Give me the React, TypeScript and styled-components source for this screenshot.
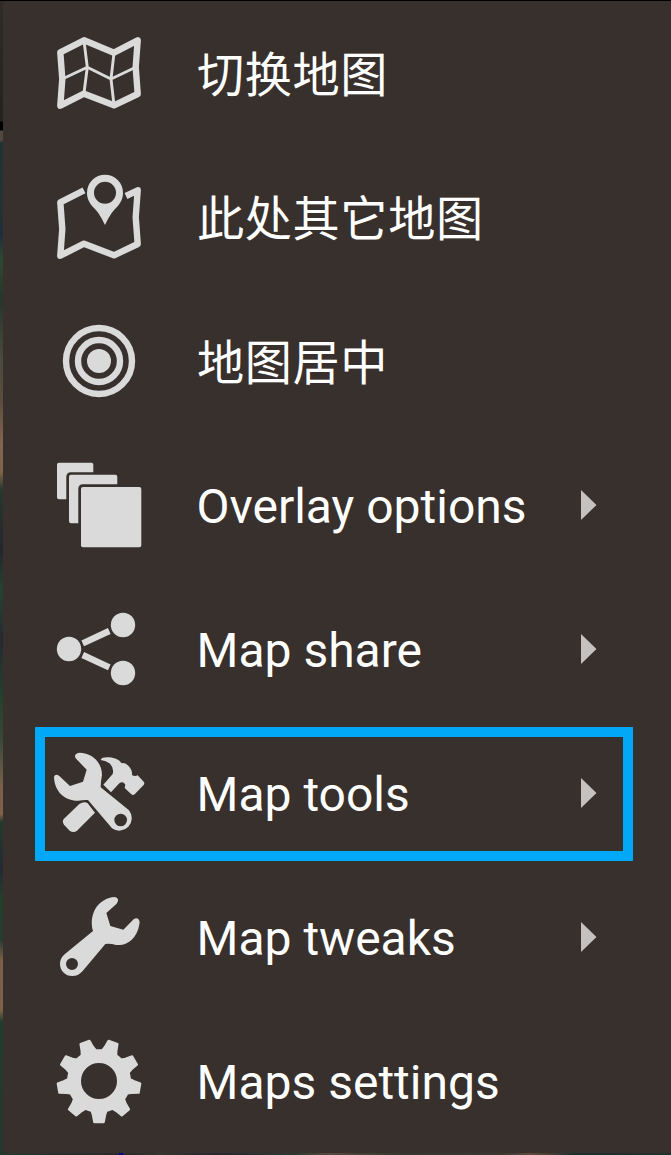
import React from 'react';
import styled, { createGlobalStyle } from 'styled-components';

const GlobalStyle = createGlobalStyle`
  body { margin: 0; background: #000; }
`;

const MapBackdrop = styled.main`
  box-sizing: border-box;
  width: 671px;
  height: 1155px;
  overflow: hidden;
  padding: 1px 0 2px 3px;
  background:
    linear-gradient(#000, #000) 0 0 / 100% 1px no-repeat,
    linear-gradient(#00009c, #00009c) 119px 100% / 4px 2px no-repeat,
    linear-gradient(90deg, #26372d 0, #292a2a 18%, #34352c 24%, #272733 32%, #2c3a31 44%, #55483b 49%, #34372e 60%, #3b3831 75%, #60493a 79%, #1b2f30 86%, #20322e 100%) 0 100% / 100% 2px no-repeat,
    linear-gradient(#302b28 0, #24211f 121px, #000 122px, #000 130px, #504841 131px, #504841 140px, #1c3430 143px, #243331 200px, #202e38 235px, #2d4932 260px, #26362b 300px, #4a4a3e 360px, #5b4c3d 400px, #846650 445px, #806247 472px, #26382e 490px, #25262c 550px, #254331 590px, #252a31 640px, #24412d 700px, #39483a 740px, #776049 785px, #806248 814px, #203b2b 822px, #262934 870px, #24412d 900px, #263c30 940px, #7b5e48 960px, #806148 1010px, #203d2d 1022px, #26362e 1155px) 0 0 / 12px 100% no-repeat,
    #312e2a;
`;

const Menu = styled.nav`
  height: 1152px;
  border-radius: 4px;
  background: #38302c;
`;

const MenuItem = styled.div`
  position: relative;
  display: grid;
  grid-template-columns: 96px 1fr 16px;
  column-gap: 49px;
  align-items: center;
  box-sizing: border-box;
  height: 144px;
  padding: 0 74px 0 48px;
`;

const Highlight = styled.span`
  position: absolute;
  top: 6px;
  left: 32px;
  box-sizing: border-box;
  width: 598px;
  height: 134px;
  border: 10px solid #00a8f7;
`;

const Icon = styled.svg`
  display: block;
  width: 96px;
  height: 96px;
  fill: #dadada;
  color: #dadada;
`;

const Label = styled.span<{ $cjk: boolean }>`
  padding-top: ${({ $cjk }) => ($cjk ? 5 : 4)}px;
  padding-left: ${({ $cjk }) => ($cjk ? 1 : 0.5)}px;
  color: #fff;
  font: 400 ${({ $cjk }) => ($cjk ? 47.2 : 48)}px/56px Roboto, 'Noto Sans CJK SC', sans-serif;
  letter-spacing: ${({ $cjk }) => ($cjk ? '0.6px' : 'normal')};
  white-space: nowrap;
`;

const Arrow = styled.svg`
  display: block;
  width: 16px;
  height: 30px;
  fill: #c5c1c0;
`;

const line = { fill: 'none', stroke: 'currentColor', strokeWidth: 6.4, strokeLinejoin: 'round' as const };

const MapIcon = () => (
  <Icon viewBox="0 0 96 96">
    <path {...line} d="M9.3 27.3 33 15.3 63 27.7 86.7 15.3 84.7 42.3 86.7 69 63 80.3 33 68.7 9.3 80.7 11.3 54Z" />
    <path {...line} strokeWidth={2.9} d="M33 16 36.3 42.3 33 68M63 28 60 54 63 80M11.3 54 36.3 42.3 60 54 84.7 42.3" />
  </Icon>
);

const MapPinIcon = () => (
  <Icon viewBox="0 0 96 96">
    <path {...line} d="M33 21.3 9.3 33.3 11.3 60 9.3 86.7 33 74.7 63 86.3 86.7 75 84.7 48.3 86.7 21.3 75 27" />
    <path fillRule="evenodd" d="M36 23.7a18 18 0 0 1 36 0C72 30 69.5 34 65.5 38.5 60 44 57.5 49 54 56 50.5 49 48 44 42.5 38.5 38.5 34 36 30 36 23.7ZM43 23.7a11 11 0 1 0 22 0 11 11 0 1 0-22 0Z" />
  </Icon>
);

const TargetIcon = () => (
  <Icon viewBox="0 0 96 96">
    <circle {...line} cx="48" cy="48" r="33" />
    <circle {...line} cx="48" cy="48" r="21" />
    <circle cx="48" cy="48" r="12" />
  </Icon>
);

const LayersIcon = () => (
  <Icon viewBox="0 0 96 96">
    <path d="M8 5.7H40.3Q42.3 5.7 42.3 7.7V15.3H20Q15.3 15.3 15.3 20V42.3H8Q6 42.3 6 40.3V7.7Q6 5.7 8 5.7Z" />
    <path d="M20 17.7H64.3Q66.3 17.7 66.3 19.7V27.3H32Q27.3 27.3 27.3 32V66.3H20Q18 66.3 18 64.3V19.7Q18 17.7 20 17.7Z" />
    <rect x="30" y="30" width="60.3" height="60.3" rx="2" />
  </Icon>
);

const ShareIcon = () => (
  <Icon viewBox="0 0 96 96">
    <path {...line} d="M31.7 42.3 58.3 30M31.7 54 58.3 66.300" />
    <circle cx="18" cy="48" r="12.2" />
    <circle cx="72" cy="24" r="12.2" />
    <circle cx="72" cy="72" r="12.2" />
  </Icon>
);

const ToolsIcon = () => (
  <Icon viewBox="63 75 288 288">
    <path fillRule="evenodd" d="M137 115Q130 102 148 98C190 99 216 130 216 165Q212 185 212 202L297 271A37.5 37.5 0 0 1 246 325L174 240Q160 239 145 242C105 243 73 215 72 170Q76 159 88 168L120 198 159 185 170 149ZM253 300a19 19 0 1 0 38 0 19 19 0 1 0-38 0Z" />
    <path d="M212 120C214 112 225 111 238 112 255 113 269 121 275 130Q285 126 295 137 308 151 306 165 314 171 323 166L341 185Q345 190 341 195L314 223Q309 227 304 223L284 204 286 194Q279 182 268 190L243 217 220 194 248 162Q253 145 240 131 229 122 212 120Z" />
    <path d="M148 252Q163 243 173 250L195 278 141 332Q130 340 119 332L102 314Q95 303 102 296Z" />
  </Icon>
);

const WrenchIcon = () => (
  <Icon viewBox="33 12 288 288">
    <path fillRule="evenodd" d="M225 36Q241 41 230 56L199 84 211 123 250 134 281 103Q294 94 299 110C295 155 265 184 228 180Q211 175 196 177L128 258C115 272 105 273 96 273A36 36 0 0 1 60 237C60 225 65 215 74 208L159 138C145 88 174 39 225 36ZM78 237a18 18 0 1 0 36 0 18 18 0 1 0-36 0Z" />
  </Icon>
);

// One tooth pointing down, from its left root to its right root, around the hub.
const TOOTH = [[-22, 90], [-18, 102], [-14, 123], [14, 123], [18, 102], [22, 90]];

const GEAR = Array.from({ length: 9 }, (_, i) => {
  const a = (i * 40 * Math.PI) / 180;
  return TOOTH.map(([x, y]) => {
    const px = 177 + x * Math.cos(a) + y * Math.sin(a);
    const py = 168 - x * Math.sin(a) + y * Math.cos(a);
    return `${px.toFixed(1)} ${py.toFixed(1)}`;
  }).join('L');
}).join('L');

const GearIcon = () => (
  <Icon viewBox="33 24 288 288">
    <path
      fillRule="evenodd"
      stroke="currentColor"
      strokeWidth="7"
      strokeLinejoin="round"
      d={`M${GEAR}ZM119.500 168a57.500 57.500 0 1 0 115 0 57.500 57.500 0 1 0-115 0Z`}
    />
  </Icon>
);

const items = [
  { label: '切换地图', Glyph: MapIcon, cjk: true },
  { label: '此处其它地图', Glyph: MapPinIcon, cjk: true },
  { label: '地图居中', Glyph: TargetIcon, cjk: true },
  { label: 'Overlay options', Glyph: LayersIcon, submenu: true },
  { label: 'Map share', Glyph: ShareIcon, submenu: true },
  { label: 'Map tools', Glyph: ToolsIcon, submenu: true, highlighted: true },
  { label: 'Map tweaks', Glyph: WrenchIcon, submenu: true },
  { label: 'Maps settings', Glyph: GearIcon },
];

export default function App() {
  return (
    <>
      <GlobalStyle />
      <MapBackdrop>
        <Menu>
          {items.map(({ label, Glyph, cjk, submenu, highlighted }) => (
            <MenuItem key={label}>
              <Glyph />
              <Label $cjk={!!cjk}>{label}</Label>
              {submenu && (
                <Arrow viewBox="0 0 16 30">
                  <path d="M0 0 15.5 15 0 30Z" />
                </Arrow>
              )}
              {highlighted && <Highlight />}
            </MenuItem>
          ))}
        </Menu>
      </MapBackdrop>
    </>
  );
}
